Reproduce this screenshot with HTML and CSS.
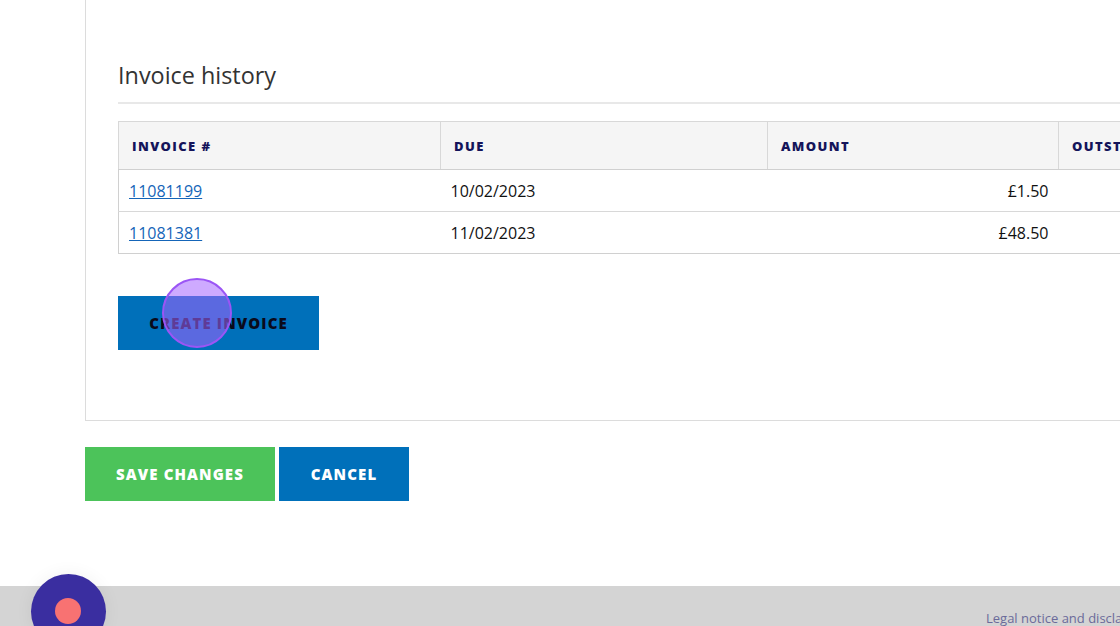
FILE: index.html
```html
<!DOCTYPE html>
<html>
<head>
<meta charset="utf-8">
<link rel="stylesheet" href="styles.css">
</head>
<body>
<div class="page">
  <div class="card">
    <h2 class="title">Invoice history</h2>
    <table class="invoices">
      <thead>
        <tr>
          <th class="c1">Invoice #</th>
          <th class="c2">Due</th>
          <th class="c3">Amount</th>
          <th class="c4">Outstanding</th>
        </tr>
      </thead>
      <tbody>
        <tr>
          <td><a href="#">11081199</a></td>
          <td>10/02/2023</td>
          <td class="num">£1.50</td>
          <td class="num">£1.50</td>
        </tr>
        <tr>
          <td><a href="#">11081381</a></td>
          <td>11/02/2023</td>
          <td class="num">£48.50</td>
          <td class="num">£48.50</td>
        </tr>
      </tbody>
    </table>
    <div class="create-wrap">
      <button class="btn btn-blue btn-create">Create invoice</button>
      <span class="cursor"></span>
    </div>
  </div>
  <div class="actions">
    <button class="btn btn-green">Save changes</button>
    <button class="btn btn-blue btn-cancel">Cancel</button>
  </div>
</div>
<footer class="footer">
  <span class="chat"><span class="chat-dot"></span></span>
  <a class="legal" href="#">Legal notice and disclaimer</a>
</footer>
</body>
</html>
```

FILE: styles.css
```css
html, body {
  margin: 0;
  padding: 0;
  overflow: hidden;
  width: 1120px;
  height: 626px;
  background: #fff;
  font-family: "Open Sans", "Liberation Sans", sans-serif;
  color: #111;
}

.page {
  padding-left: 85px;
  height: 586px;
}

.card {
  width: 1300px;
  box-sizing: border-box;
  border-left: 1px solid #dcdcdc;
  border-bottom: 1px solid #dcdcdc;
  padding: 58px 0 70px 32px;
}

.title {
  margin: 0;
  font-size: 23.4px;
  font-weight: 400;
  line-height: 34px;
  color: #333;
  padding-bottom: 10px;
  border-bottom: 2px solid #e8e8e8;
}

.invoices {
  margin-top: 17px;
  border-collapse: collapse;
  border: 1px solid #d0d0d0;
  width: 1250px;
  table-layout: fixed;
  font-size: 16px;
}

.invoices th {
  background: #f5f5f5;
  height: 47px;
  padding: 0 13px;
  text-align: left;
  font-size: 13px;
  font-weight: 800;
  letter-spacing: 1.4px;
  text-transform: uppercase;
  color: #14145a;
  border: 1px solid #d8d8d8;
  border-bottom: 1px solid #d0d0d0;
}

.invoices .c1 { width: 295px; }
.invoices .c2 { width: 300px; }
.invoices .c3 { width: 264px; }

.invoices td {
  height: 41px;
  padding: 0 10px;
  border-top: 1px solid #d8d8d8;
  color: #111;
}

.invoices td.num {
  text-align: right;
}

.invoices a {
  color: #1565b8;
  text-decoration: underline;
}

.create-wrap {
  position: relative;
  margin-top: 42px;
  width: 201px;
}

.btn {
  display: inline-flex;
  align-items: center;
  justify-content: center;
  height: 54px;
  border: 0;
  margin: 0;
  font-family: "Open Sans", "Liberation Sans", sans-serif;
  font-size: 15px;
  font-weight: 800;
  letter-spacing: 1.1px;
  text-transform: uppercase;
  color: #fff;
  cursor: pointer;
}

.btn-blue { background: #0070ba; }
.btn-green { background: #4cc35a; }

.btn-create {
  width: 201px;
  color: #0a0a1a;
}

.cursor {
  position: absolute;
  left: 44px;
  top: -18px;
  width: 70px;
  height: 70px;
  border-radius: 50%;
  box-sizing: border-box;
  background: rgba(165, 100, 255, 0.55);
  border: 2px solid #9b55f5;
}

.actions {
  display: flex;
  gap: 4px;
  margin-top: 26px;
}

.btn-green { width: 190px; }
.btn-cancel { width: 130px; }

.footer {
  position: relative;
  height: 40px;
  background: #d4d4d4;
}

.legal {
  position: absolute;
  left: 986px;
  top: 23px;
  font-size: 13px;
  color: #6a6a9a;
  text-decoration: none;
  white-space: nowrap;
}

.chat {
  position: absolute;
  left: 31px;
  top: -12px;
  width: 75px;
  height: 75px;
  border-radius: 50%;
  background: #3a2ea0;
  box-shadow: 0 0 18px rgba(0,0,0,0.06);
}

.chat-dot {
  position: absolute;
  left: 24px;
  top: 24px;
  width: 26px;
  height: 26px;
  border-radius: 50%;
  background: #f87272;
}
```
